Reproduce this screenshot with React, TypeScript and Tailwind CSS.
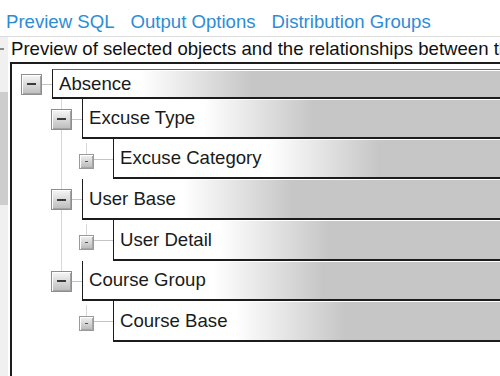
import React from "react";

type TreeNode = {
  label: string;
  level: 0 | 1 | 2;
  height: string;
  bg: string;
  lineBelow?: boolean;
  guide?: boolean;
};

const nodes: TreeNode[] = [
  { label: "Absence", level: 0, height: "h-[30px]", bg: "bg-[linear-gradient(to_right,#fff_88px,#c6c6c6_200px)]" },
  { label: "Excuse Type", level: 1, height: "h-[40px]", lineBelow: true, bg: "bg-[linear-gradient(to_right,#fff_120px,#c6c6c6_230px)]" },
  { label: "Excuse Category", level: 2, height: "h-[40px]", guide: true, bg: "bg-[linear-gradient(to_right,#fff_155px,#c6c6c6_265px)]" },
  { label: "User Base", level: 1, height: "h-[41px]", lineBelow: true, bg: "bg-[linear-gradient(to_right,#fff_100px,#c6c6c6_210px)]" },
  { label: "User Detail", level: 2, height: "h-[41px]", guide: true, bg: "bg-[linear-gradient(to_right,#fff_105px,#c6c6c6_215px)]" },
  { label: "Course Group", level: 1, height: "h-[40px]", lineBelow: false, bg: "bg-[linear-gradient(to_right,#fff_130px,#c6c6c6_240px)]" },
  { label: "Course Base", level: 2, height: "h-[41px]", guide: false, bg: "bg-[linear-gradient(to_right,#fff_121px,#c6c6c6_231px)]" },
];

function BigToggle() {
  return (
    <span className="flex h-[21px] w-[21px] shrink-0 items-center justify-center border border-[#8e8e8e] bg-[linear-gradient(to_bottom,#f7f7f7,#bcbcbc)] shadow-[inset_1px_1px_0_#fff,inset_-1px_-1px_0_#a2a2a2]">
      <span className="h-[2px] w-[9px] bg-[#3a3a3a]" />
    </span>
  );
}

function SmallToggle() {
  return (
    <span className="flex h-[15px] w-[15px] shrink-0 items-center justify-center border border-[#9a9a9a] bg-[linear-gradient(to_bottom,#f2f2f2,#b8b8b8)] shadow-[inset_1px_1px_0_#fff,inset_-1px_-1px_0_#a8a8a8]">
      <span className="h-px w-[3px] bg-[#555]" />
    </span>
  );
}

function Row({ node, first }: { node: TreeNode; first: boolean }) {
  return (
    <div className={`flex ${node.height}`}>
      {node.level >= 1 && <div className="w-[30px] shrink-0" />}
      {node.level === 2 && (
        <div className="w-[28px] shrink-0 pl-[10px]">
          {node.guide && <div className="h-full w-px bg-[#d8d8d8]" />}
        </div>
      )}
      {node.level === 0 && (
        <div className="flex w-[31px] shrink-0 items-center">
          <BigToggle />
          <span className="h-px flex-1 bg-[#c4c4c4]" />
        </div>
      )}
      {node.level === 1 && (
        <div className="flex w-[31px] shrink-0 items-center">
          <div className="flex h-full w-[21px] flex-col items-center">
            <span className="w-px flex-1 bg-[#d8d8d8]" />
            <BigToggle />
            <span className={`w-px flex-1 ${node.lineBelow ? "bg-[#d8d8d8]" : ""}`} />
          </div>
          <span className="h-px flex-1 bg-[#c4c4c4]" />
        </div>
      )}
      {node.level === 2 && (
        <div className="flex w-[34px] shrink-0 items-center">
          <div className="flex h-full w-[15px] flex-col items-center">
            <span className="mt-[4px] w-px flex-1 bg-[#d8d8d8]" />
            <SmallToggle />
            <span className="flex-1" />
          </div>
          <span className="h-px flex-1 bg-[#c4c4c4]" />
        </div>
      )}
      <div
        className={`flex min-w-0 flex-1 items-center border-b-2 border-l border-[#1c1c1c] pl-[6px] text-[18.6px] leading-[22px] text-[#1a1a1a] shadow-[inset_0_1px_0_#fff] ${
          first ? "border-t border-t-[#6a6a6a]" : ""
        } ${node.bg}`}
      >
        <span className="whitespace-nowrap">{node.label}</span>
      </div>
    </div>
  );
}

export default function App() {
  return (
    <div className="flex h-[376px] w-[500px] flex-col overflow-hidden bg-white font-['Liberation_Sans',Arial,sans-serif]">
      <div className="flex h-[37px] shrink-0 gap-[16px] whitespace-nowrap border-b border-[#dcdcdc] pl-[6px] pt-[11px] text-[18.6px] leading-[22px] text-[#2d8cd6]">
        <span>Preview SQL</span>
        <span>Output Options</span>
        <span>Distribution Groups</span>
      </div>
      <div className="flex min-h-0 flex-1">
        <div className="flex w-[8px] shrink-0 flex-col bg-[#f0f0f0]">
          <span className="mt-[11px] h-[2px] w-[4px] bg-[#8a8a8a]" />
          <span className="mt-[42px] h-[113px] w-full bg-[#cdcdcd]" />
        </div>
        <div className="ml-[2px] flex min-w-0 flex-1 flex-col">
          <div className="h-[25px] shrink-0 overflow-hidden whitespace-nowrap pl-[1px] pt-[1px] text-[18.6px] leading-[22px] text-[#111]">
            Preview of selected objects and the relationships between them
          </div>
          <div className="flex-1 border-l-2 border-t-2 border-[#1c1c1c] bg-white pl-[9px] pt-[5px]">
            {nodes.map((n, i) => (
              <Row key={n.label} node={n} first={i === 0} />
            ))}
          </div>
        </div>
      </div>
    </div>
  );
}
